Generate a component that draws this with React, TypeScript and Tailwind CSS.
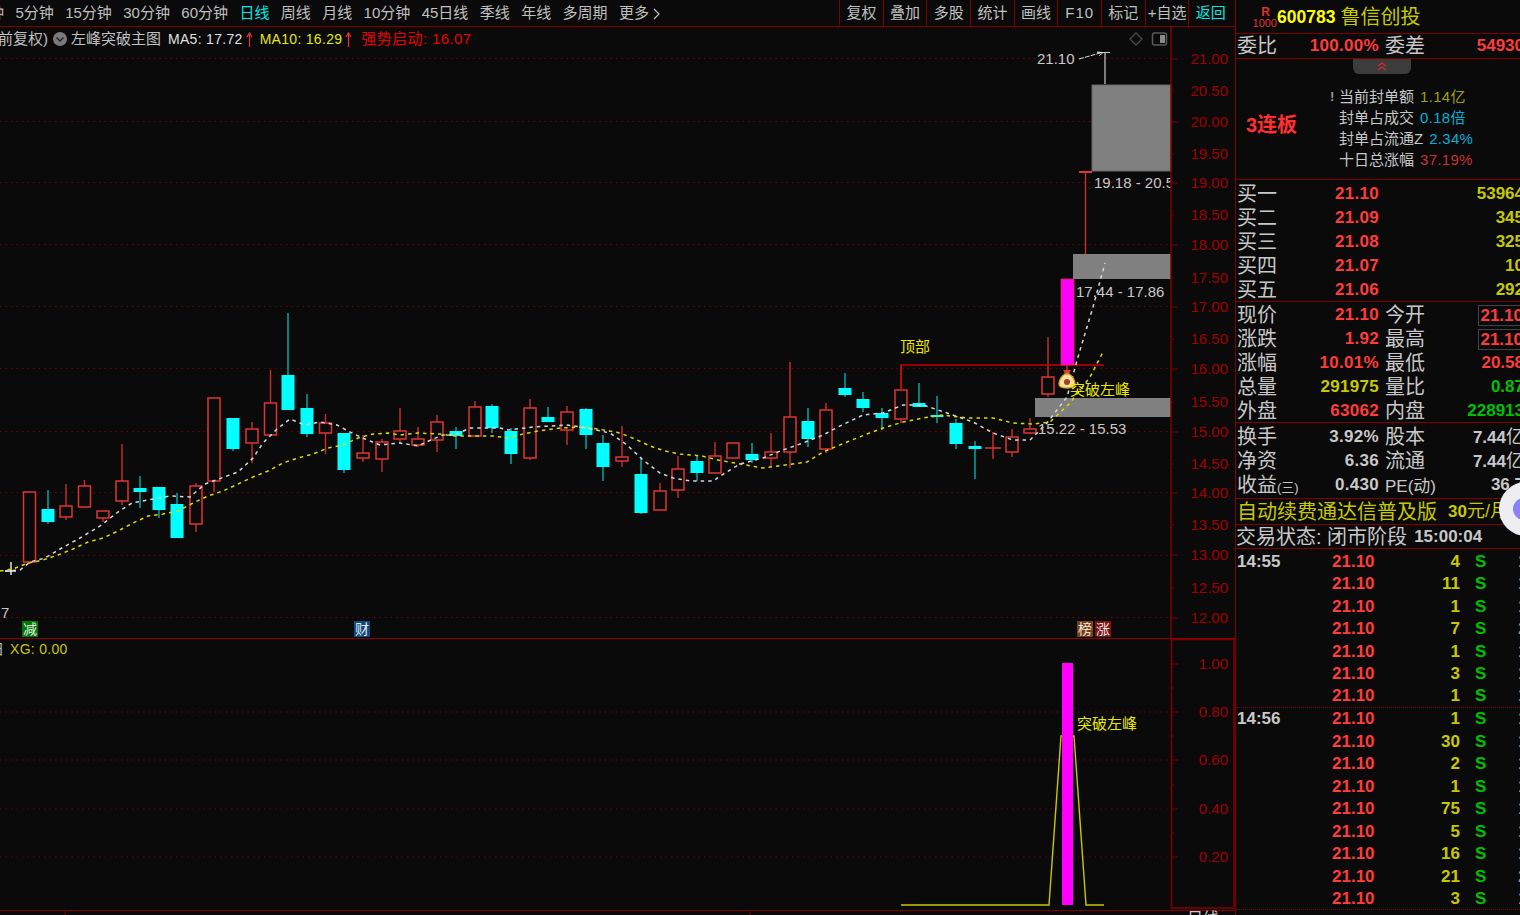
import React from "react";

const tabs = ["5分钟", "15分钟", "30分钟", "60分钟", "日线", "周线", "月线", "10分钟", "45日线", "季线", "年线", "多周期", "更多"];
const tools = ["复权", "叠加", "多股", "统计", "画线", "F10", "标记", "+自选", "返回"];

// x, body top, body bottom, wick top, wick bottom, up
const candles: [number, number, number, number, number, boolean][] = [
  [29.5, 492, 562, 492, 564, true], [48, 509, 522, 490, 524, false], [66, 506, 517, 484, 520, true],
  [84.5, 486, 507, 480, 507, true], [103, 511, 518, 511, 522, true], [122, 481, 501, 444, 505, true],
  [140, 488, 492, 476, 508, false], [159, 487, 510, 487, 518, false], [177, 504, 538, 493, 538, false],
  [196, 486, 524, 483, 532, true], [214, 398, 481, 398, 492, true], [233, 418, 449, 418, 451, false],
  [252, 429, 443, 422, 463, true], [270.5, 403, 435, 370, 435, true], [288, 375, 410, 313, 410, false],
  [307, 408, 434, 394, 437, false], [325.5, 423, 433, 414, 454, true], [344, 433, 470, 433, 473, false],
  [363, 453, 458, 435, 462, true], [382, 442, 459, 439, 472, true], [400, 431, 439, 408, 443, true],
  [418, 439, 445, 427, 447, true], [437, 422, 440, 415, 452, true], [456, 431, 436, 427, 449, false],
  [475, 407, 436, 401, 436, true], [492, 406, 428, 404, 433, false], [511, 431, 454, 428, 464, false],
  [530, 408, 458, 399, 460, true], [548, 417, 422, 407, 422, false], [567, 412, 430, 406, 445, true],
  [586, 409, 435, 408, 449, false], [603, 443, 467, 435, 481, false], [622, 457, 461, 426, 467, true],
  [641, 474, 513, 457, 514, false], [660, 491, 510, 483, 510, true], [678, 469, 490, 456, 498, true],
  [697, 461, 473, 456, 481, false], [715, 456, 473, 442, 473, true], [733, 443, 458, 443, 458, true],
  [752, 454, 460, 443, 463, false], [771, 452, 458, 433, 466, true], [790, 417, 452, 362, 468, true],
  [808, 421, 439, 408, 447, false], [826, 410, 449, 403, 453, true], [845, 388, 395, 373, 397, false],
  [863, 399, 408, 392, 412, false], [882, 413, 418, 408, 430, false], [901, 390, 419, 365, 423, true],
  [919, 403, 407, 383, 407, false], [937, 415, 417, 396, 423, false], [956, 423, 444, 419, 449, false],
  [975, 446, 449, 441, 479, false], [1012, 437, 452, 429, 457, true], [1030, 429, 433, 418, 434, true],
  [1048, 377, 394, 337, 397, true],
];

const ma5 = "5,571 20,570 30,562 45,558 60,549 80,538 100,526 118,512 132,503 148,500 170,496 190,497 205,484 238,472 253,458 263,443 277,429 290,419 305,425 320,422 337,425 350,432 365,439 380,445 400,443 418,446 433,439 443,435 455,435 470,428 500,428 508,430 533,427 567,425 587,428 610,433 627,445 643,460 660,473 673,478 690,481 713,481 725,473 740,464 763,458 783,450 803,443 823,435 838,427 863,415 883,413 903,405 923,405 947,413 973,422 993,433 1013,440 1030,440 1047,423 1067,397 1078,357 1093,307 1105,263";
const ma10 = "0,571 13,569 28,563 43,560 58,555 73,549 88,542 103,538 118,531 133,523 148,516 163,514 178,511 193,503 208,496 223,491 238,484 253,477 268,471 283,463 298,458 313,454 328,448 343,445 358,438 373,434 388,433 400,435 418,433 440,434 455,436 493,436 508,438 523,434 538,431 560,428 583,427 598,429 620,433 635,439 650,446 665,451 680,454 702,456 718,460 740,464 763,468 778,466 800,463 807,462 823,452 847,442 867,434 883,428 903,422 923,418 943,415 967,418 993,418 1013,423 1033,424 1050,422 1070,403 1090,377 1103,352";

const axisMain = [["21.00", 59], ["20.50", 91], ["20.00", 122], ["19.50", 154], ["19.00", 183], ["18.50", 215], ["18.00", 245], ["17.50", 278], ["17.00", 307], ["16.50", 339], ["16.00", 369], ["15.50", 402], ["15.00", 432], ["14.50", 464], ["14.00", 493], ["13.50", 525], ["13.00", 555], ["12.50", 588], ["12.00", 618]] as [string, number][];
const axisSub = [["1.00", 664], ["0.80", 712], ["0.60", 760], ["0.40", 809], ["0.20", 857]] as [string, number][];

const ticks: [string, string, string][] = [
  ["14:55", "4", "1"], ["", "11", "1"], ["", "1", "1"], ["", "7", "2"], ["", "1", "1"], ["", "3", "1"], ["", "1", "1"],
  ["14:56", "1", "1"], ["", "30", "1"], ["", "2", "1"], ["", "1", "1"], ["", "75", "1"], ["", "5", "1"], ["", "16", "1"], ["", "21", "2"], ["", "3", "1"],
  ["15:00", "557", "3"],
];

const red = "text-[#ff3c3c]";
const yellow = "text-[#c8c800]";
const green = "text-[#00c000]";
const white = "text-[#c8c8c8]";

function Badge({ x, fill, label }: { x: number; fill: string; label: string }) {
  return (
    <g>
      <rect x={x} y={621} width={16} height={16} fill={fill} />
      <text x={x + 8} y={634} fontSize="14" fill="#e8e8e8" textAnchor="middle">{label}</text>
    </g>
  );
}

function UpArrow() {
  return (
    <svg width="7" height="15" viewBox="0 0 7 15" className="ml-[3px] flex-none" fill="none" stroke="#f03030" strokeWidth="1.2">
      <path d="M3.5 15V1M1 5L3.5 1L6 5" />
    </svg>
  );
}

function MainChart() {
  const gridY = [58, 121, 182, 244, 306, 368, 431, 492, 555, 617];
  return (
    <svg width="1235" height="612" viewBox="0 27 1235 612" className="block">
      <defs>
        <clipPath id="plot"><rect x="0" y="27" width="1171" height="611" /></clipPath>
      </defs>
      {gridY.map((y) => (
        <line key={y} x1="0" x2="1171" y1={y + 0.5} y2={y + 0.5} stroke="#780000" strokeDasharray="1.5 4" />
      ))}
      {candles.map(([x, t, b, wt, wb, up], i) => (
        <g key={i}>
          <line x1={x} x2={x} y1={wt} y2={wb} stroke={up ? "#c83030" : "#00b0b0"} strokeWidth="1.4" />
          {up ? (
            <rect x={x - 6} y={t} width={12} height={b - t} fill="#0a0a0a" stroke="#e03434" strokeWidth="1.5" />
          ) : (
            <rect x={x - 6.5} y={t} width={13} height={b - t} fill="#00ffff" />
          )}
        </g>
      ))}
      <path d="M985 448H1001M993 432V459" stroke="#e03434" strokeWidth="1.3" fill="none" />
      <path d="M5 571H16M11 562V575" stroke="#f0f0f0" strokeWidth="1.4" fill="none" />

      <rect x="1092" y="85" width="79" height="86" fill="#808080" stroke="#666" />
      <rect x="1073" y="254" width="98" height="25" fill="#808080" />
      <rect x="1035" y="398" width="136" height="19" fill="#808080" />

      <path d="M901 390V365H1104" stroke="#c80000" strokeWidth="1.5" fill="none" />
      <rect x="1061" y="279" width="13" height="86" fill="#ff00ff" stroke="#d83232" strokeWidth="0.8" />
      <line x1="1067" x2="1067" y1="365" y2="373" stroke="#c83030" strokeWidth="1.4" />
      <path d="M1079 172H1092" stroke="#e03838" strokeWidth="2" />
      <line x1="1085.5" x2="1085.5" y1="172" y2="254" stroke="#c83030" strokeWidth="1.4" />
      <path d="M1105 84V52.5M1097 52.5H1110" stroke="#c8c8c8" strokeWidth="1.2" fill="none" />
      <path d="M1079 59L1102 52.5M1097 52L1103 52.5L1099 56" stroke="#d8d8d8" strokeWidth="1" strokeDasharray="5 1" fill="none" />

      <polyline points={ma10} fill="none" stroke="#dcdc00" strokeWidth="1.5" strokeDasharray="3.5 4" />
      <polyline points={ma5} fill="none" stroke="#d8d8d8" strokeWidth="1.5" strokeDasharray="3.5 4" />

      {/* money bag */}
      <g>
        <path d="M1063 370H1071L1069 374H1065Z" fill="#d84020" />
        <path d="M1065 374H1069C1073 376 1075 381 1075 384C1075 387 1071 388 1067 388C1063 388 1059 387 1059 384C1059 381 1061 376 1065 374Z" fill="#f8e49a" stroke="#e89820" strokeWidth="1.3" />
        <circle cx="1067" cy="382" r="3" fill="#a83a30" />
      </g>

      <g clipPath="url(#plot)" fontSize="15" fill="#c8c8c8">
        <text x="1037" y="64">21.10</text>
        <text x="1094" y="188">19.18 - 20.53</text>
        <text x="1076" y="297">17.44 - 17.86</text>
        <text x="1038" y="434">15.22 - 15.53</text>
        <text x="1" y="618">7</text>
      </g>
      <text x="900" y="352" fontSize="15" fill="#e8e800">顶部</text>
      <text x="1070" y="395" fontSize="15" fill="#e8e800">突破左峰</text>

      <Badge x={22} fill="#007800" label="减" />
      <Badge x={354} fill="#0c4a80" label="财" />
      <Badge x={1077} fill="#7c3e10" label="榜" />
      <Badge x={1095} fill="#7c1010" label="涨" />

      {/* corner icons */}
      <path d="M1136 33L1142 39L1136 45L1130 39Z" fill="none" stroke="#4a4a4a" strokeWidth="1.3" />
      <rect x="1152.5" y="33" width="14" height="12" rx="2" fill="none" stroke="#5a5a5a" strokeWidth="1.5" />
      <rect x="1160" y="35" width="5" height="8" fill="#8a8a8a" />

      {/* price axis */}
      <line x1="1171" x2="1171" y1="27" y2="638" stroke="#800000" strokeWidth="1.5" />
      {axisMain.map(([label, y], i) => (
        <g key={label}>
          <line x1="1171" x2={i % 2 === 0 ? 1178 : 1174} y1={y} y2={y} stroke="#800000" />
          <text x="1228" y={y + 4.5} fontSize="15" fill="#a00000" textAnchor="end">{label}</text>
        </g>
      ))}
      <line x1="0" x2="1235" y1="638.5" y2="638.5" stroke="#900000" strokeWidth="1.2" />
    </svg>
  );
}

function SubChart() {
  return (
    <svg width="1235" height="276" viewBox="0 639 1235 276" className="block">
      {[712, 760, 809, 857].map((y) => (
        <line key={y} x1="0" x2="1171" y1={y} y2={y} stroke="#780000" strokeDasharray="1.5 4" />
      ))}
      <polyline points="901,905 1049,905 1061,736 1074,736 1086,905 1104,905" fill="none" stroke="#c8c800" strokeWidth="1.4" />
      <rect x="1062" y="663" width="11" height="242" fill="#ff00ff" />
      <text x="1077" y="729" fontSize="15" fill="#e8e800">突破左峰</text>
      <text x="10" y="654" fontSize="14" fill="#c8c800" letterSpacing="0.3">XG: 0.00</text>
      <text x="-10" y="654" fontSize="14" fill="#c0c0c0">日</text>
      <rect x="1171.5" y="639.5" width="62.5" height="268.5" fill="none" stroke="#800000" strokeWidth="1.6" />
      {axisSub.map(([label, y]) => (
        <g key={label}>
          <line x1="1171" x2="1178" y1={y} y2={y} stroke="#800000" />
          <text x="1228" y={y + 4.5} fontSize="15" fill="#a00000" textAnchor="end">{label}</text>
        </g>
      ))}
      {[688, 736, 785, 833].map((y) => (
        <line key={y} x1="1171" x2="1174" y1={y} y2={y} stroke="#800000" />
      ))}
      <line x1="0" x2="1235" y1="910.5" y2="910.5" stroke="#800000" strokeWidth="1.2" />
      <path d="M65 911V915M750 911V915" stroke="#800000" />
      <text x="1187" y="924" fontSize="16" fill="#c8c8c8">日线</text>
    </svg>
  );
}

function Cell({ label, value, color }: { label: React.ReactNode; value: React.ReactNode; color: string }) {
  return (
    <div className="flex w-[143px] flex-none items-center justify-between">
      <span className={`whitespace-nowrap text-[20px] ${white}`}>{label}</span>
      <span className={`whitespace-nowrap pr-px text-[17px] font-bold tracking-[0.3px] ${color}`}>{value}</span>
    </div>
  );
}

function Pair({ l1, v1, c1, l2, v2, c2, boxed }: { l1: React.ReactNode; v1: string; c1: string; l2: React.ReactNode; v2: React.ReactNode; c2: string; boxed?: boolean }) {
  return (
    <div className="flex h-6 w-[300px] items-center pl-px">
      <Cell label={l1} value={v1} color={c1} />
      <div className="ml-[5px] flex w-[139px] flex-none items-center justify-between">
        <span className={`whitespace-nowrap text-[20px] ${white}`}>{l2}</span>
        <span className={`whitespace-nowrap text-[17px] font-bold ${c2} ${boxed ? "border border-[#444] pl-px leading-[19px]" : ""}`}>{v2}</span>
      </div>
    </div>
  );
}

function BuyRow({ label, price, vol }: { label: string; price: string; vol: string }) {
  return (
    <div className="flex h-6 w-[300px] items-center pl-px">
      <Cell label={label} value={price} color={red} />
      <span className={`ml-[5px] w-[139px] flex-none text-right text-[17px] font-bold ${yellow}`}>{vol}</span>
    </div>
  );
}

function SealRow({ label, value, color, mark }: { label: string; value: string; color: string; mark?: boolean }) {
  return (
    <div className={`relative flex h-[21px] items-center gap-[6px] text-[15px] ${white}`}>
      {mark && <span className="absolute left-[-9px] top-0 text-[13px] font-bold text-[#999]">!</span>}
      <span>{label}</span>
      <span className={`${color} tracking-[0.3px]`}>{value}</span>
    </div>
  );
}

function QuotePanel() {
  return (
    <aside className="h-[915px] w-[285px] flex-none overflow-hidden border-l border-[#800000]">
      <div className="flex h-[34px] items-center border-b border-[#800000] pt-px">
        <div className="flex w-[41px] flex-none flex-col items-end leading-none text-[#e03030]">
          <span className="mr-[7px] text-[12px] font-bold">R</span>
          <span className="text-[11px]">1000</span>
        </div>
        <span className="text-[17.5px] font-bold text-[#ffff00]">600783</span>
        <span className="ml-[5px] text-[20px] text-[#c8c800]">鲁信创投</span>
      </div>
      <div className="flex h-[25px] w-[300px] items-center border-b border-[#800000] pl-px">
        <Cell label="委比" value="100.00%" color={red} />
        <div className="ml-[5px] flex w-[139px] flex-none items-center justify-between">
          <span className={`text-[20px] ${white}`}>委差</span>
          <span className={`text-[17px] font-bold ${red}`}>54930</span>
        </div>
      </div>
      <div className="relative flex h-[121px] border-b border-[#800000]">
        <div className="absolute left-[117px] top-0 flex h-[15px] w-[58px] items-center justify-center rounded-b-[6px] bg-[#3c3c3c]">
          <svg width="12" height="9" viewBox="0 0 12 9" fill="none" stroke="#d03030" strokeWidth="1.4">
            <path d="M2 4L6 1L10 4M2 8L6 5L10 8" />
          </svg>
        </div>
        <div className="flex w-[103px] flex-none items-center pl-[10px] pt-[12px] text-[20px] font-bold text-[#ff3030]">3连板</div>
        <div className="pt-[28px]">
          <SealRow label="当前封单额" value="1.14亿" color="text-[#a0a000]" mark />
          <SealRow label="封单占成交" value="0.18倍" color="text-[#00b0d8]" />
          <SealRow label="封单占流通Z" value="2.34%" color="text-[#00b0d8]" />
          <SealRow label="十日总涨幅" value="37.19%" color="text-[#c83232]" />
        </div>
      </div>
      <div className="h-[122px] border-b border-[#800000] pt-[2px]">
        <BuyRow label="买一" price="21.10" vol="53964" />
        <BuyRow label="买二" price="21.09" vol="345" />
        <BuyRow label="买三" price="21.08" vol="325" />
        <BuyRow label="买四" price="21.07" vol="10" />
        <BuyRow label="买五" price="21.06" vol="292" />
      </div>
      <div className="h-[121px] border-b border-[#800000] pt-px">
        <Pair l1="现价" v1="21.10" c1={red} l2="今开" v2="21.10" c2={red} boxed />
        <Pair l1="涨跌" v1="1.92" c1={red} l2="最高" v2="21.10" c2={red} boxed />
        <Pair l1="涨幅" v1="10.01%" c1={red} l2="最低" v2="20.58" c2={red} />
        <Pair l1="总量" v1="291975" c1={yellow} l2="量比" v2="0.87" c2={green} />
        <Pair l1="外盘" v1="63062" c1={red} l2="内盘" v2="228913" c2={green} />
      </div>
      <div className="h-[76px] border-b border-[#800000] pt-[2px]">
        <Pair l1="换手" v1="3.92%" c1={white} l2="股本" v2={<>7.44<span className="text-[18px] font-normal">亿</span></>} c2={white} />
        <Pair l1="净资" v1="6.36" c1={white} l2="流通" v2={<>7.44<span className="text-[18px] font-normal">亿</span></>} c2={white} />
        <Pair l1={<>收益<span className="text-[13px]">(三)</span></>} v1="0.430" c1={white} l2={<span className="text-[17px]">PE(动)</span>} v2="36.7" c2={white} />
      </div>
      <div className={`flex h-[26px] w-[300px] items-center border-b border-[#800000] pl-px text-[20px] ${yellow}`}>
        <span>自动续费通达信普及版</span>
        <span className="ml-[11px] whitespace-nowrap text-[17px] font-bold">30<span className="text-[18px] font-normal">元/月</span></span>
      </div>
      <div className={`flex h-6 w-[300px] items-center border-b border-[#800000] text-[20px] ${white}`}>
        <span>交易状态: 闭市阶段</span>
        <span className="ml-[7px] text-[17px] font-bold">15:00:04</span>
      </div>
      <div className="w-[300px] pt-px">
        {ticks.map(([time, vol, n], i) => (
          <div
            key={i}
            className={`flex h-[22.5px] items-center pl-px text-[17px] font-bold ${i === 6 || i === 15 ? "border-b border-dotted border-[#800000]" : ""}`}
          >
            <span className={`w-[95px] flex-none ${white}`}>{time}</span>
            <span className={`w-[44px] flex-none ${red}`}>21.10</span>
            <span className={`w-[84px] flex-none text-right ${yellow}`}>{vol}</span>
            <span className={`ml-[15px] w-[43px] flex-none ${green}`}>S</span>
            <span className="text-[#909090]">{n}</span>
          </div>
        ))}
      </div>
    </aside>
  );
}

export default function App() {
  return (
    <div className="relative flex h-[915px] w-[1520px] overflow-hidden bg-[#0a0a0a] font-['Liberation_Sans','Noto_Sans_CJK_SC',sans-serif]">
      <main className="w-[1235px] flex-none">
        <div className="flex h-[27px] items-center justify-between overflow-hidden border-b-[1.5px] border-[#800000] text-[15px] text-[#c0c0c0]">
          <div className="-ml-[11px] flex items-center gap-[11.4px] whitespace-nowrap">
            <span>钟</span>
            {tabs.map((t) => (
              <span key={t} className={t === "日线" ? "text-[#00e8e8]" : ""}>
                {t}
                {t === "更多" && (
                  <svg width="8" height="12" viewBox="0 0 8 12" className="ml-1 inline-block" fill="none" stroke="#c0c0c0" strokeWidth="1.2">
                    <path d="M1 1L6 6L1 11" />
                  </svg>
                )}
              </span>
            ))}
          </div>
          <div className="mr-[3px] flex h-full items-center">
            {tools.map((t) => (
              <span
                key={t}
                className={`flex h-full w-[43.67px] items-center justify-center whitespace-nowrap border-l border-[#800000] ${t === "返回" ? "text-[#00e8e8]" : ""} ${t === "F10" ? "tracking-[1px]" : ""}`}
              >
                {t}
              </span>
            ))}
          </div>
        </div>
        <div className="relative">
          <div className="absolute left-0 top-0 flex h-[24px] items-center whitespace-nowrap text-[15px] text-[#c0c0c0]">
            <span className="-ml-[2px]">前复权)</span>
            <svg width="14" height="14" viewBox="0 0 14 14" className="ml-[5px]">
              <circle cx="7" cy="7" r="7" fill="#7a7a7a" />
              <path d="M3.5 5.5L7 9L10.5 5.5" fill="none" stroke="#222" strokeWidth="1.4" />
            </svg>
            <span className="ml-[4px]">左峰突破主图</span>
            <span className="ml-[7px] text-[14px] tracking-[0.3px] text-[#e0e0e0]">MA5: 17.72</span>
            <UpArrow />
            <span className="ml-[7px] text-[14px] tracking-[0.3px] text-[#e8e800]">MA10: 16.29</span>
            <UpArrow />
            <span className="ml-[9px] tracking-[0.4px] text-[#e80000]">强势启动: 16.07</span>
          </div>
          <MainChart />
        </div>
        <SubChart />
      </main>
      <QuotePanel />
      <div className="absolute left-[1499px] top-[482px] flex h-[54px] w-[54px] items-center rounded-full bg-[#eeeef2] pl-[14px]">
        <div className="h-[22px] w-[14px] rounded-l-full bg-gradient-to-br from-[#6a8cff] to-[#b070f0]" />
      </div>
    </div>
  );
}
